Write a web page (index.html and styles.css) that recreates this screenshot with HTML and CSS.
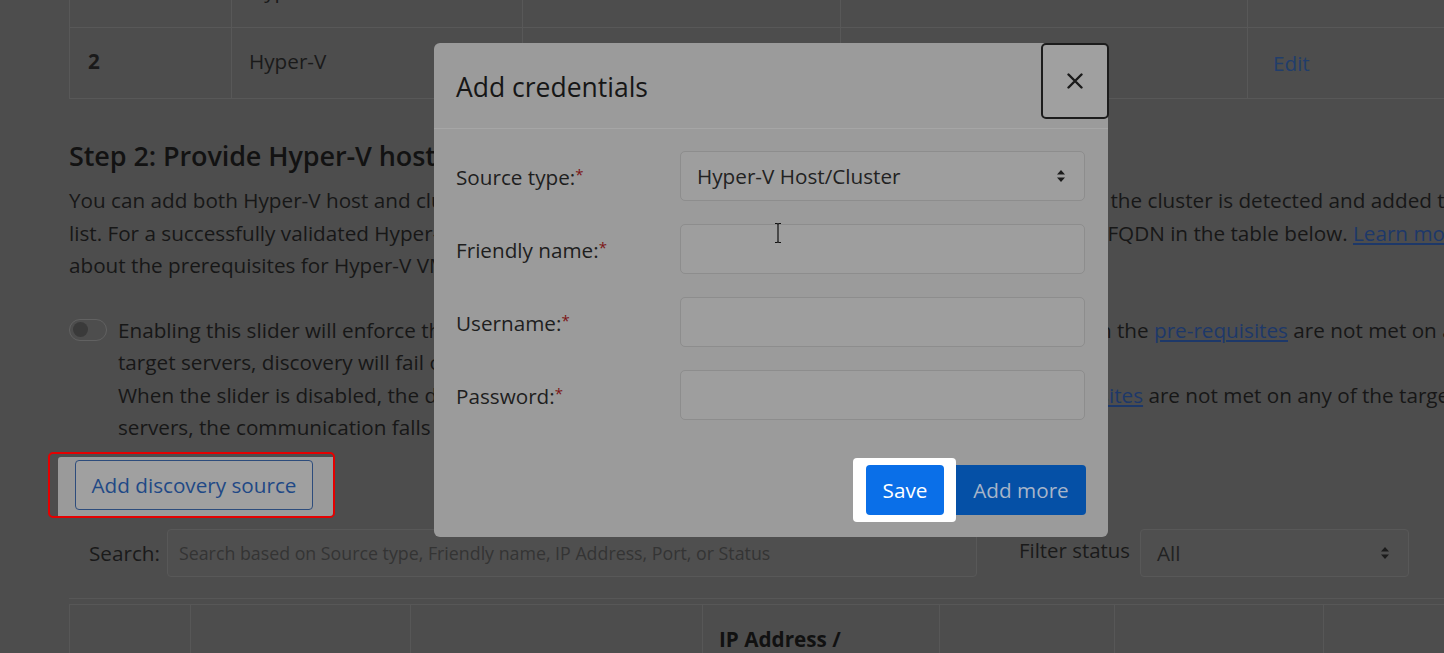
FILE: index.html
```html
<!DOCTYPE html>
<html lang="en">
<head>
<meta charset="utf-8">
<title>Add credentials</title>
<link rel="stylesheet" href="styles.css">
</head>
<body>
<div class="page">
  <table class="hosts">
    <colgroup><col class="c1"><col class="c2"><col class="c3"><col class="c4"><col class="c5"></colgroup>
    <tr><td class="num">1</td><td>Hyper-V</td><td></td><td></td><td class="act"><a class="edit">Edit</a></td></tr>
    <tr><td class="num">2</td><td>Hyper-V</td><td></td><td></td><td class="act"><a class="edit">Edit</a></td></tr>
  </table>

  <h4 class="step">Step 2: Provide Hyper-V host/cluster details</h4>
  <p class="desc">You can add both Hyper-V host and cluster information. If you add a cluster, all of the nodes that are part of the cluster is detected and added to the<br>list. For a successfully validated Hyper-V host/cluster, you can view the validated host/cluster's name and its FQDN in the table below. <a class="link">Learn more</a><br>about the prerequisites for Hyper-V VMs discovery.</p>

  <div class="slider-row">
    <span class="toggle"><span class="knob"></span></span>
    <p class="slider-text">Enabling this slider will enforce the HTTPS communication with server. If the slider is enabled and when the <a class="link">pre-requisites</a> are not met on any of the<br>target servers, discovery will fail on those servers.<br>When the slider is disabled, the discovery will always be attempted via HTTPS first, and if the <a class="link">pre-requisites</a> are not met on any of the target<br>servers, the communication falls back to HTTP.</p>
  </div>

  <div class="spot-red">
    <div class="spot-lit">
      <button class="btn-outline" type="button">Add discovery source</button>
    </div>
  </div>

  <div class="search-row">
    <label class="search-label">Search:</label>
    <div class="search-input">Search based on Source type, Friendly name, IP Address, Port, or Status</div>
    <label class="filter-label">Filter status</label>
    <div class="filter-select">
      <span>All</span>
      <svg class="updown" width="10" height="16" viewBox="0 0 10 16"><path d="M1 6.5 L5 2 L9 6.5 Z M1 9.5 L5 14 L9 9.5 Z" fill="#1c1c1c"/></svg>
    </div>
  </div>

  <div class="sources-wrap">
    <table class="sources">
      <colgroup><col class="s1"><col class="s2"><col class="s3"><col class="s4"><col class="s5"><col class="s6"><col class="s7"></colgroup>
      <tr><th></th><th></th><th></th><th>IP Address /<br>FQDN</th><th></th><th></th><th></th></tr>
    </table>
  </div>
</div>

<div class="modal">
  <div class="modal-header">
    <h5 class="modal-title">Add credentials</h5>
    <button class="close" type="button" aria-label="Close">
      <svg width="16" height="16" viewBox="0 0 16 16"><path d="M1.5 1.5 L14.5 14.5 M14.5 1.5 L1.5 14.5" stroke="#1a1a1a" stroke-width="2.4" stroke-linecap="round"/></svg>
    </button>
  </div>
  <div class="modal-body">
    <label class="flabel">Source type:<span class="req">*</span></label>
    <div class="field select">
      <span>Hyper-V Host/Cluster</span>
      <svg class="updown" width="10" height="16" viewBox="0 0 10 16"><path d="M1 6.5 L5 2 L9 6.5 Z M1 9.5 L5 14 L9 9.5 Z" fill="#1c1c1c"/></svg>
    </div>
    <label class="flabel">Friendly name:<span class="req">*</span></label>
    <div class="field"></div>
    <label class="flabel">Username:<span class="req">*</span></label>
    <div class="field"></div>
    <label class="flabel">Password:<span class="req">*</span></label>
    <div class="field"></div>
  </div>
  <div class="modal-footer">
    <span class="spot-white"><button class="btn-save" type="button">Save</button></span>
    <button class="btn-more" type="button">Add more</button>
  </div>
</div>

<svg class="cursor" width="10" height="22" viewBox="0 0 10 22"><path d="M2 1.5 H4 Q5 1.5 5 3 V19 Q5 20.5 4 20.5 H2 M8 1.5 H6 Q5 1.5 5 3 M8 20.5 H6 Q5 20.5 5 19" fill="none" stroke="#111" stroke-width="1.2"/></svg>
</body>
</html>
```

FILE: styles.css
```css
* { box-sizing: border-box; }

html, body {
  margin: 0;
  padding: 0;
}

body {
  width: 1444px;
  height: 653px;
  overflow: hidden;
  position: relative;
  background: #4d4d4d;
  color: #151515;
  font-family: "Open Sans", "Noto Sans", sans-serif;
  font-size: 20.7px;
}

.page {
  width: 1700px;
  padding-left: 69px;
}

/* top hosts table */
.hosts {
  border-collapse: collapse;
  table-layout: fixed;
  width: 1478px;
  margin-top: -44px;
}
.hosts col.c1 { width: 162px; }
.hosts col.c2 { width: 291px; }
.hosts col.c3 { width: 318px; }
.hosts col.c4 { width: 407px; }
.hosts col.c5 { width: 300px; }
.hosts td {
  height: 71px;
  border: 1px solid #585858;
  padding: 0 0 5px 17px;
  vertical-align: middle;
  color: #1a1a1a;
}
.hosts td.num { font-weight: 700; padding-left: 18px; }
.hosts td.act { padding-left: 25px; padding-bottom: 1px; }
.edit { color: #213d6b; }

.step {
  margin: 40px 0 0;
  font-size: 27px;
  line-height: 34px;
  font-weight: 600;
  color: #121212;
  letter-spacing: -0.1px;
}

.desc {
  margin: 11px 0 0;
  line-height: 32.5px;
  white-space: nowrap;
  color: #171717;
}

.link {
  color: #1d3869;
  text-decoration: underline;
}

.slider-row {
  display: flex;
  align-items: flex-start;
  gap: 11px;
  margin-top: 32px;
}
.toggle {
  flex: none;
  width: 38px;
  height: 22px;
  margin-top: 5px;
  border: 1.5px solid #616161;
  border-radius: 11px;
  display: flex;
  align-items: center;
  padding-left: 3px;
}
.knob {
  width: 15px;
  height: 15px;
  border-radius: 50%;
  background: #3a3a3a;
}
.slider-text {
  margin: 0;
  line-height: 32.5px;
  white-space: nowrap;
  color: #171717;
}

/* highlighted discovery source button */
.spot-red {
  margin-top: 8px;
  margin-left: -21px;
  width: 287px;
  height: 66px;
  border: 2px solid #e50000;
  border-radius: 5px;
  padding: 3px 0 0 8px;
}
.spot-lit {
  height: 59px;
  background: #9a9a9a;
  border-radius: 3px 0 3px 0;
  padding: 3px 20px 6px 17px;
}
.btn-outline {
  width: 238px;
  height: 50px;
  border: 1px solid #2d4c7c;
  border-radius: 4px;
  background: #a0a0a0;
  color: #1f4986;
  font-family: inherit;
  font-size: 20.7px;
  padding: 0;
}

.search-row {
  display: flex;
  align-items: center;
  margin-top: 11px;
  height: 48px;
}
.search-label {
  width: 98px;
  padding-left: 20px;
  color: #1a1a1a;
}
.search-input {
  width: 810px;
  height: 48px;
  border: 1px solid #585858;
  border-radius: 4px;
  background: #4f4f4f;
  color: #343434;
  font-size: 17.8px;
  padding-left: 11px;
  display: flex;
  align-items: center;
  white-space: nowrap;
}
.filter-label {
  margin-left: 42px;
  width: 121px;
  color: #1a1a1a;
  align-self: flex-start;
  margin-top: 7px;
  white-space: nowrap;
  font-size: 20.4px;
}
.filter-select {
  width: 269px;
  height: 48px;
  border: 1px solid #585858;
  border-radius: 4px;
  background: #4f4f4f;
  color: #222;
  display: flex;
  align-items: center;
  justify-content: space-between;
  padding: 0 18px 0 16px;
}

.sources-wrap {
  margin-top: 21px;
  border-top: 1px solid #575757;
  padding-top: 5px;
  width: 1500px;
}
.sources {
  border-collapse: collapse;
  table-layout: fixed;
  width: 1431px;
}
.sources col.s1 { width: 121px; }
.sources col.s2 { width: 220px; }
.sources col.s3 { width: 292px; }
.sources col.s4 { width: 237px; }
.sources col.s5 { width: 175px; }
.sources col.s6 { width: 209px; }
.sources col.s7 { width: 177px; }
.sources th {
  border: 1px solid #575757;
  border-bottom: none;
  text-align: left;
  vertical-align: top;
  padding: 18px 0 0 16px;
  height: 80px;
  line-height: 32px;
  font-weight: 700;
  color: #111;
}

/* modal */
.modal {
  position: absolute;
  left: 434px;
  top: 43px;
  width: 674px;
  height: 494px;
  background: #9b9b9b;
  border-radius: 6px;
  color: #1e1e1e;
}
.modal-header {
  position: relative;
  height: 86px;
  border-bottom: 1px solid #a6a6a6;
  padding-left: 22px;
  display: flex;
  align-items: center;
}
.modal-title {
  margin: 0;
  font-size: 26.5px;
  font-weight: 400;
  color: #161616;
  padding-top: 2px;
}
.close {
  position: absolute;
  right: -1px;
  top: 0;
  width: 68px;
  height: 76px;
  border: 2px solid #1c1c1c;
  border-radius: 5px;
  background: #a0a0a0;
  display: flex;
  align-items: center;
  justify-content: center;
  padding: 0;
}

.modal-body {
  display: grid;
  grid-template-columns: 224px 405px;
  grid-auto-rows: 50px;
  row-gap: 23px;
  padding: 22px 0 0 22px;
  align-items: center;
}
.flabel {
  color: #1e1e1e;
  padding-top: 2px;
}
.req {
  color: #7c1515;
  font-size: 15px;
  vertical-align: 5px;
}
.field {
  height: 50px;
  border: 1px solid #8d8d8d;
  border-radius: 5px;
  background: #9e9e9e;
}
.field.select {
  display: flex;
  align-items: center;
  justify-content: space-between;
  padding: 0 18px 0 16px;
  color: #222;
}

.modal-footer {
  display: flex;
  justify-content: flex-end;
  padding-right: 22px;
  margin-top: 38px;
}
.spot-white {
  display: block;
  background: #ffffff;
  border-radius: 4px;
  padding: 7px 12px 7px 13px;
}
.btn-save {
  display: block;
  width: 78px;
  height: 50px;
  border: none;
  border-radius: 4px;
  background: #0a6fe8;
  color: #ffffff;
  font-family: inherit;
  font-size: 20.7px;
  font-weight: 500;
  padding: 0;
}
.btn-more {
  margin-top: 7px;
  width: 130px;
  height: 50px;
  border: none;
  border-radius: 0 4px 4px 0;
  background: #0550a6;
  color: #a7b5c9;
  font-family: inherit;
  font-size: 20.7px;
  font-weight: 500;
  padding: 0;
}

.cursor {
  position: absolute;
  left: 773px;
  top: 222px;
}
```
